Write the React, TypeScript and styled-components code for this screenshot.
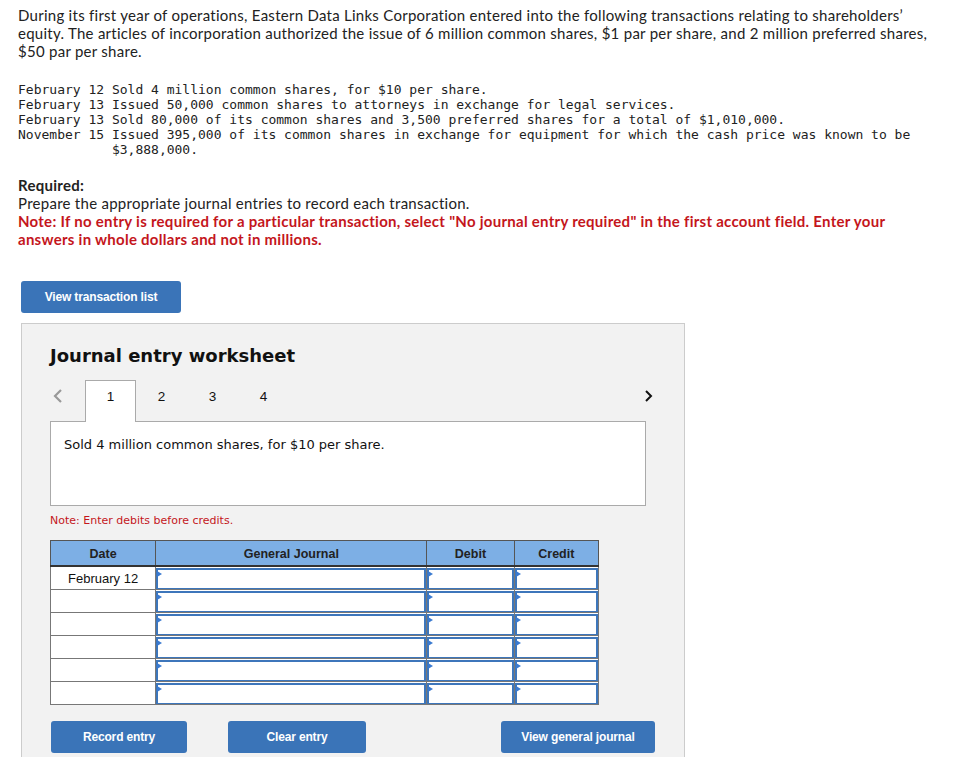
import React from 'react';
import styled, {createGlobalStyle} from 'styled-components';

const GlobalStyle = createGlobalStyle`
  body {
    margin: 0;
    background: #fff;
    color: #222;
    font-family: Lato, "Liberation Sans", sans-serif;
  }
`;

const Page = styled.div`
  padding: 6px 3px 0 18px;
`;

const Intro = styled.p`
  margin: 0;
  font-size: 15px;
  line-height: 18px;
  letter-spacing: 0.27px;
`;

const Transactions = styled.pre`
  margin: 22px 0 0;
  font-family: "DejaVu Sans Mono", monospace;
  font-size: 13px;
  line-height: 15px;
  color: #222;
`;

const Required = styled.section`
  margin-top: 19px;
  font-size: 15px;
  line-height: 18px;
  letter-spacing: 0.27px;
  strong {
    display: block;
  }
`;

const RedNote = styled.div`
  padding-right: 24px;
  color: #c4161c;
  font-weight: bold;
`;

const BlueButton = styled.button<{w: number}>`
  width: ${p => p.w}px;
  height: 32px;
  border: none;
  border-radius: 3px;
  background: #3a74b8;
  color: #fff;
  font-family: "Liberation Sans", Arial, sans-serif;
  font-weight: bold;
  font-size: 12px;
  letter-spacing: -0.15px;
  padding: 0;
`;

const TopButton = styled(BlueButton)`
  display: block;
  margin: 33px 0 0 3px;
`;

const Worksheet = styled.div`
  margin: 10px 0 0 3px;
  width: 605px;
  padding: 20px 29px 30px 28px;
  background: #f2f2f2;
  border: 1px solid #ccc;
`;

const Title = styled.h2`
  margin: 0;
  font-family: "DejaVu Sans", Verdana, sans-serif;
  font-weight: bold;
  font-size: 18px;
  line-height: 24px;
  color: #111;
`;

const TabRow = styled.div`
  margin-top: 12px;
  display: flex;
  align-items: stretch;
  height: 41px;
  font-family: "Liberation Sans", Arial, sans-serif;
  font-size: 13.5px;
`;

const Arrow = styled.div<{dark?: boolean}>`
  box-sizing: border-box;
  width: ${p => (p.dark ? 'auto' : '35px')};
  margin-left: ${p => (p.dark ? 'auto' : '0')};
  padding: 0 ${p => (p.dark ? '2px' : '0')} 10px ${p => (p.dark ? '0' : '3px')};
  display: flex;
  align-items: center;
`;

const Tab = styled.div<{active?: boolean}>`
  width: 51px;
  display: flex;
  align-items: center;
  justify-content: center;
  box-sizing: border-box;
  color: #111;
  background: ${p => (p.active ? '#fff' : 'transparent')};
  border: 1px solid ${p => (p.active ? '#aaa' : 'transparent')};
  border-bottom: none;
  position: relative;
  z-index: 1;
  margin-bottom: -1px;
  padding-bottom: 10px;
`;

const Description = styled.div`
  width: 596px;
  height: 85px;
  box-sizing: border-box;
  background: #fff;
  border: 1px solid #aaa;
  padding: 15px 13px;
  font-family: "DejaVu Sans", Verdana, sans-serif;
  font-size: 13px;
  color: #111;
`;

const DebitNote = styled.div`
  margin-top: 8px;
  font-family: "DejaVu Sans", Verdana, sans-serif;
  font-size: 11px;
  color: #c4161c;
`;

const Journal = styled.table`
  margin-top: 13px;
  border-collapse: collapse;
  width: 549px;
  font-family: "Liberation Sans", Arial, sans-serif;
  font-size: 13px;
  background: #fff;
`;

const HeadCell = styled.th<{w: number}>`
  width: ${p => p.w}px;
  height: 22px;
  padding: 2px 0 0;
  background: #7dafe5;
  border: 1px solid #555;
  border-bottom: 2px solid #333;
  font-size: 12.5px;
  color: #222;
`;

const DateCell = styled.td`
  height: 22px;
  padding: 0;
  border: 1px solid #777;
  text-align: center;
  color: #111;
`;

const EntryCell = styled.td`
  height: 22px;
  padding: 0;
  border: 1px solid #777;
`;

const EntryInput = styled.div`
  position: relative;
  height: 18px;
  border: 2px solid #3d76bb;
  border-bottom-width: 1px;
  background: #fff;
  &::before {
    content: '';
    position: absolute;
    left: -1px;
    top: 1px;
    border-left: 5px solid #3a7ad0;
    border-top: 3px solid transparent;
    border-bottom: 3px solid transparent;
  }
`;

const ButtonRow = styled.div`
  margin-top: 16px;
  display: flex;
  gap: 41px;
  padding-left: 1px;
  > :last-child {
    margin-left: auto;
  }
`;

const ChevronLeft = () => (
  <svg width="10" height="16" viewBox="0 0 10 16">
    <path d="M8 2 L2 8 L8 14" fill="none" stroke="#999" strokeWidth="2.2"/>
  </svg>
);

const ChevronRight = () => (
  <svg width="9" height="14" viewBox="0 0 9 14">
    <path d="M2 2 L7 7 L2 12" fill="none" stroke="#111" strokeWidth="2"/>
  </svg>
);

const rows = ['February 12', '', '', '', '', ''];

function App() {
  return (
    <Page>
      <GlobalStyle/>
      <Intro>
        During its first year of operations, Eastern Data Links Corporation entered into the following transactions relating to shareholders’ equity. The articles of incorporation authorized the issue of 6 million common shares, $1 par per share, and 2 million preferred shares, $50 par per share.
      </Intro>
      <Transactions>{`February 12 Sold 4 million common shares, for $10 per share.
February 13 Issued 50,000 common shares to attorneys in exchange for legal services.
February 13 Sold 80,000 of its common shares and 3,500 preferred shares for a total of $1,010,000.
November 15 Issued 395,000 of its common shares in exchange for equipment for which the cash price was known to be
            $3,888,000.`}</Transactions>
      <Required>
        <strong>Required:</strong>
        Prepare the appropriate journal entries to record each transaction.
        <RedNote>
          Note: If no entry is required for a particular transaction, select "No journal entry required" in the first account field. Enter your answers in whole dollars and not in millions.
        </RedNote>
      </Required>
      <TopButton w={160}>View transaction list</TopButton>
      <Worksheet>
        <Title>Journal entry worksheet</Title>
        <TabRow>
          <Arrow><ChevronLeft/></Arrow>
          <Tab active>1</Tab>
          <Tab>2</Tab>
          <Tab>3</Tab>
          <Tab>4</Tab>
          <Arrow dark><ChevronRight/></Arrow>
        </TabRow>
        <Description>Sold 4 million common shares, for $10 per share.</Description>
        <DebitNote>Note: Enter debits before credits.</DebitNote>
        <Journal>
          <thead>
            <tr>
              <HeadCell w={105}>Date</HeadCell>
              <HeadCell w={273}>General Journal</HeadCell>
              <HeadCell w={87}>Debit</HeadCell>
              <HeadCell w={84}>Credit</HeadCell>
            </tr>
          </thead>
          <tbody>
            {rows.map((d, i) => (
              <tr key={i}>
                <DateCell>{d}</DateCell>
                <EntryCell><EntryInput/></EntryCell>
                <EntryCell><EntryInput/></EntryCell>
                <EntryCell><EntryInput/></EntryCell>
              </tr>
            ))}
          </tbody>
        </Journal>
        <ButtonRow>
          <BlueButton w={136}>Record entry</BlueButton>
          <BlueButton w={138}>Clear entry</BlueButton>
          <BlueButton w={154}>View general journal</BlueButton>
        </ButtonRow>
      </Worksheet>
    </Page>
  );
}

export default App;
